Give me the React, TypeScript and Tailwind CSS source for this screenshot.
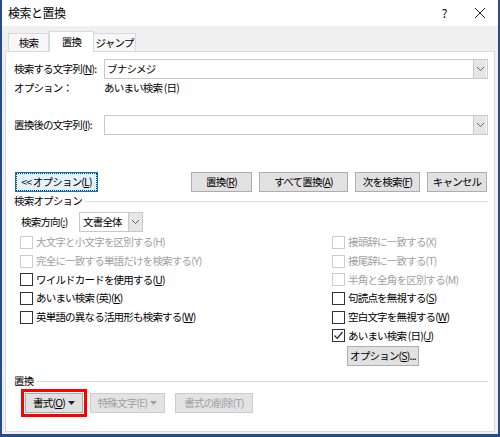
import React from 'react';

function Acc({ pre, k, post = '' }: { pre: string; k: string; post?: string }) {
  return (
    <span>
      {pre}(<span className="underline">{k}</span>){post}
    </span>
  );
}

function Chevron({ color = '#606060' }: { color?: string }) {
  return (
    <svg width="9" height="6" viewBox="0 0 9 6">
      <path d="M1 1 L4.5 4.5 L8 1" fill="none" stroke={color} strokeWidth="1" />
    </svg>
  );
}

function Combo({ value = '' }: { value?: string }) {
  return (
    <div className="flex-1 h-[20px] border border-[#c8c8c8] bg-white flex items-center">
      <span className="flex-1 pl-[2px] text-black">{value}</span>
      <div className="w-[13px] h-[18px] bg-[#e6e6e6] border-l border-[#c8c8c8] flex items-center justify-center mr-[1px]">
        <Chevron />
      </div>
    </div>
  );
}

function Btn({
  children,
  disabled,
  w,
  focused,
}: {
  children: React.ReactNode;
  disabled?: boolean;
  w: string;
  focused?: boolean;
}) {
  return (
    <div
      className={`${w} h-[20px] shrink-0 flex items-center justify-center border ${
        focused
          ? 'border-[#0078d7] bg-[#e5f1fb]'
          : disabled
          ? 'border-[#cccccc] bg-[#e3e3e3] text-[#a0a0a0]'
          : 'border-[#adadad] bg-[#e1e1e1] text-black'
      }`}
    >
      {focused ? (
        <div className="w-full h-full border border-dotted border-[#333] flex items-center justify-center">
          {children}
        </div>
      ) : (
        children
      )}
    </div>
  );
}

function Check({
  children,
  checked,
  disabled,
}: {
  children: React.ReactNode;
  checked?: boolean;
  disabled?: boolean;
}) {
  return (
    <div className="h-[18.7px] flex items-center gap-[3px]">
      <div
        className={`w-[13px] h-[13px] shrink-0 border bg-white flex items-center justify-center ${
          disabled ? 'border-[#cccccc]' : 'border-[#333333]'
        }`}
      >
        {checked && (
          <svg width="11" height="11" viewBox="0 0 11 11">
            <path d="M1.5 5.5 L4.2 8.3 L9.5 2" fill="none" stroke="#222" strokeWidth="1.2" />
          </svg>
        )}
      </div>
      <span className={disabled ? 'text-[#a0a0a0]' : 'text-black'}>{children}</span>
    </div>
  );
}

function GroupLabel({ text }: { text: string }) {
  return (
    <div className="h-[14px] flex items-center gap-[3px]">
      <span className="text-black">{text}</span>
      <div className="flex-1 h-px bg-[#dcdcdc]" />
    </div>
  );
}

export default function App() {
  return (
    <div className="w-[500px] h-[437px] border-x-2 border-b-[3px] border-[#2b4a8b] bg-[#f0f0f0] flex flex-col whitespace-nowrap leading-[14px] text-[10.5px] tracking-[-0.8px] font-['Noto_Sans_CJK_JP','Noto_Sans',sans-serif]">
      {/* title bar */}
      <div className="h-[26px] bg-white flex items-center pl-[6px] pr-[12px] text-[12px] tracking-[-0.5px] text-black shrink-0">
        <span className="flex-1">検索と置換</span>
        <span className="mr-[27px]">?</span>
        <svg width="12" height="12" viewBox="0 0 12 12">
          <path d="M1 1 L11 11 M11 1 L1 11" stroke="#222" strokeWidth="1" />
        </svg>
      </div>

      {/* tabs */}
      <div className="h-[25px] flex items-end pl-[6px] shrink-0">
        <div className="w-[41px] h-[18px] border border-b-0 border-[#d9d9d9] bg-[#f7f7f7] flex items-center justify-center text-black">
          検索
        </div>
        <div className="w-[45px] h-[21px] -mb-px border border-b-0 border-[#d9d9d9] bg-white flex items-center justify-center text-black relative z-10">
          置換
        </div>
        <div className="w-[42px] h-[18px] border border-b-0 border-l-0 border-[#d9d9d9] bg-[#f7f7f7] flex items-center justify-center text-black">
          ジャンプ
        </div>
      </div>

      {/* panel */}
      <div className="flex-1 mx-[3px] mb-[2px] border border-[#d9d9d9] bg-white pl-[8px] pr-[6px] pt-[7px] flex flex-col">
        <div className="flex items-center">
          <span className="w-[90px] shrink-0 text-black">
            <Acc pre="検索する文字列" k="N" post=":" />
          </span>
          <Combo value="ブナシメジ" />
        </div>
        <div className="flex items-center h-[14px] mt-[2px]">
          <span className="w-[90px] shrink-0 text-black">オプション：</span>
          <span className="text-black">あいまい検索 (日)</span>
        </div>

        <div className="flex items-center mt-[20px]">
          <span className="w-[90px] shrink-0 text-black">
            <Acc pre="置換後の文字列" k="I" post=":" />
          </span>
          <Combo />
        </div>

        <div className="flex items-center mt-[37px] pl-[1px]">
          <Btn w="w-[83px]" focused>
            <span>
              &lt;&lt; オプション(<span className="underline">L</span>)
            </span>
          </Btn>
          <div className="flex-1" />
          <Btn w="w-[61px]">
            <Acc pre="置換" k="R" />
          </Btn>
          <div className="w-[7px]" />
          <Btn w="w-[89px]">
            <Acc pre="すべて置換" k="A" />
          </Btn>
          <div className="w-[7px]" />
          <Btn w="w-[65px]">
            <Acc pre="次を検索" k="F" />
          </Btn>
          <div className="w-[7px]" />
          <Btn w="w-[60px]">キャンセル</Btn>
          <div className="w-[1px]" />
        </div>

        <div className="mt-[2px]">
          <GroupLabel text="検索オプション" />
        </div>

        <div className="flex items-center mt-[4px] pl-[7px]">
          <span className="w-[58px] shrink-0 text-black">
            <Acc pre="検索方向" k=":" />
          </span>
          <div className="w-[64px] h-[20px] border border-[#c8c8c8] bg-white flex items-center">
            <span className="flex-1 pl-[3px] text-black">文書全体</span>
            <div className="w-[14px] h-[18px] bg-[#e6e6e6] border-l border-[#c8c8c8] flex items-center justify-center">
              <Chevron />
            </div>
          </div>
        </div>

        <div className="flex mt-[1px] pl-[6px]">
          <div className="flex-1 flex flex-col">
            <Check disabled>大文字と小文字を区別する(H)</Check>
            <Check disabled>完全に一致する単語だけを検索する(Y)</Check>
            <Check>
              <Acc pre="ワイルドカードを使用する" k="U" />
            </Check>
            <Check>
              <Acc pre="あいまい検索 (英)" k="K" />
            </Check>
            <Check>
              <Acc pre="英単語の異なる活用形も検索する" k="W" />
            </Check>
          </div>
          <div className="w-[156px] flex flex-col">
            <Check disabled>接頭辞に一致する(X)</Check>
            <Check disabled>接尾辞に一致する(T)</Check>
            <Check disabled>半角と全角を区別する(M)</Check>
            <Check>
              <Acc pre="句読点を無視する" k="S" />
            </Check>
            <Check>
              <Acc pre="空白文字を無視する" k="W" />
            </Check>
            <Check checked>
              <Acc pre="あいまい検索 (日)" k="J" />
            </Check>
            <div className="pl-[15px] mt-[1px]">
              <Btn w="w-[72px]">
                <span>
                  オプション(<span className="underline">S</span>)...
                </span>
              </Btn>
            </div>
          </div>
        </div>

        <div className="mt-[8px]">
          <GroupLabel text="置換" />
        </div>

        <div className="flex items-center mt-[1px] pl-[7px] gap-[3px]">
          <div className="border-[3px] border-[#ff0000] p-px">
            <Btn w="w-[58px]">
              <span className="flex items-center gap-[3px]">
                <Acc pre="書式" k="O" />
                <svg width="7" height="4" viewBox="0 0 7 4">
                  <path d="M0 0 L7 0 L3.5 4 Z" fill="#222" />
                </svg>
              </span>
            </Btn>
          </div>
          <Btn w="w-[75px]" disabled>
            <span className="flex items-center gap-[3px]">
              特殊文字(E)
              <svg width="7" height="4" viewBox="0 0 7 4">
                <path d="M0 0 L7 0 L3.5 4 Z" fill="#a0a0a0" />
              </svg>
            </span>
          </Btn>
          <div className="w-[4px]" />
          <Btn w="w-[78px]" disabled>
            書式の削除(T)
          </Btn>
        </div>
      </div>
    </div>
  );
}
